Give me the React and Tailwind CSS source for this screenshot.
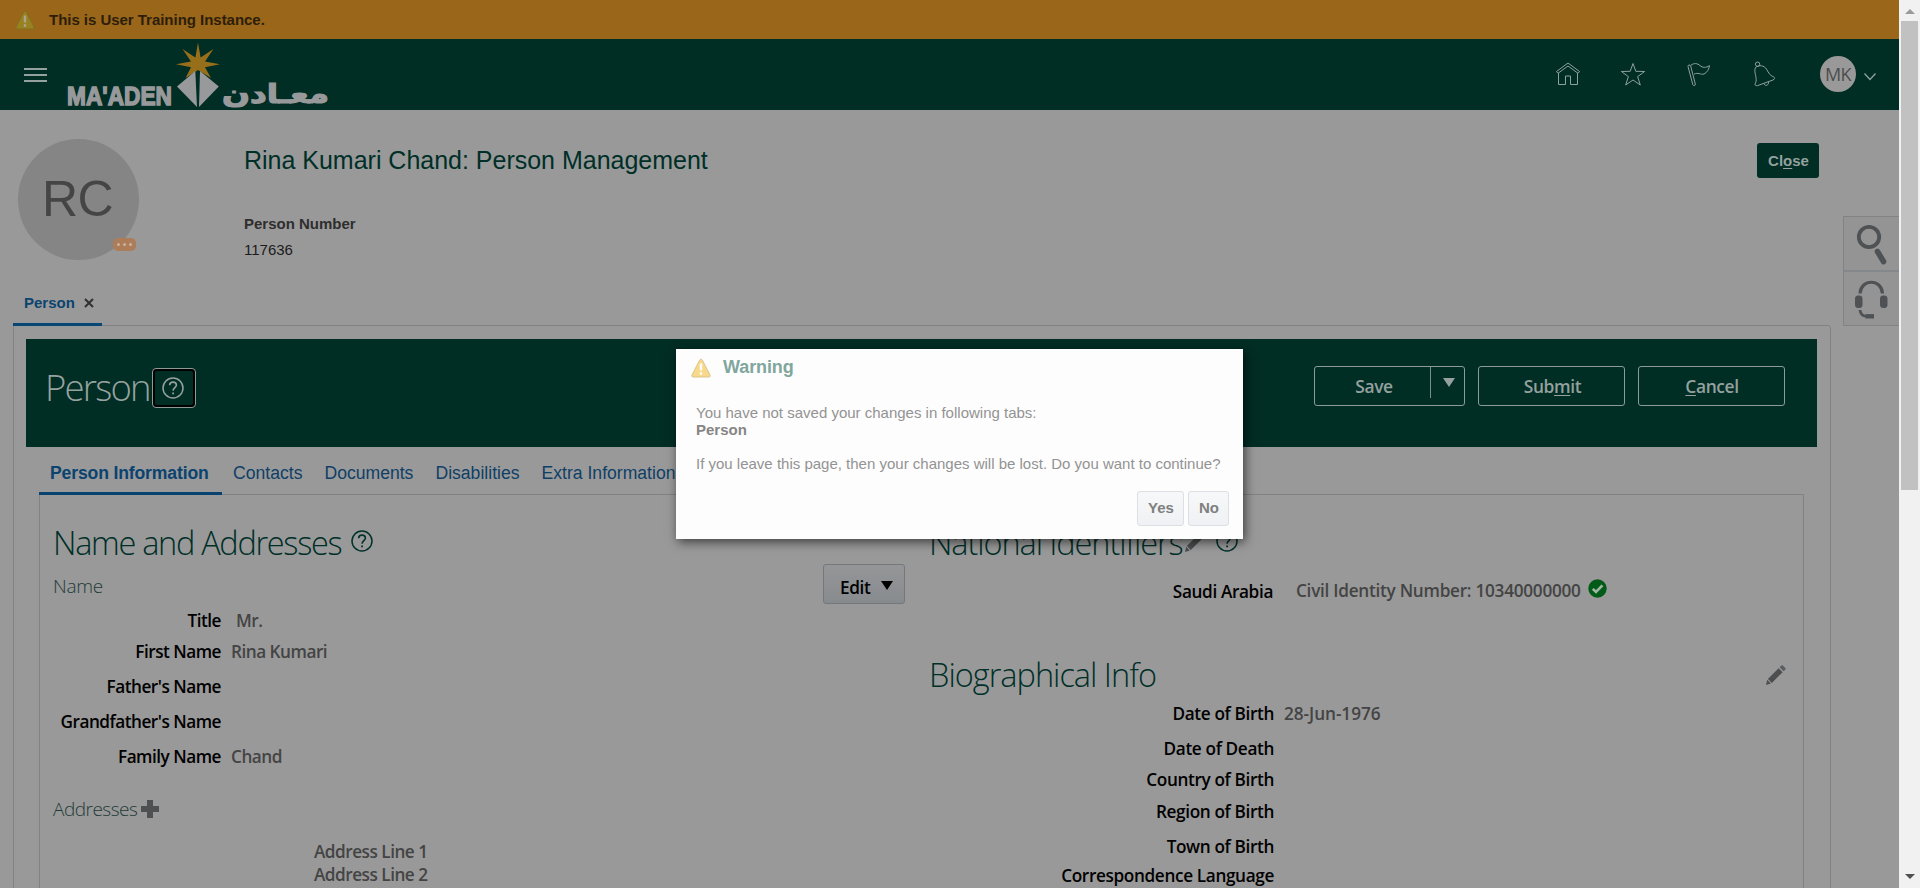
import React from "react";

const sans = "font-['Liberation_Sans',Arial,sans-serif]";
const ui = "font-['Open_Sans','Noto_Sans',sans-serif]";

function WarningIcon({ className, fill, stroke, mark }) {
  return (
    <svg className={className} viewBox="0 0 20 20">
      <path d="M10 1.2 Q10.9 1.2 11.4 2.2 L19 17 Q19.6 18.9 18 19 H2 Q.4 18.9 1 17 L8.6 2.2 Q9.1 1.2 10 1.2Z" fill={fill} stroke={stroke} strokeWidth="1" />
      <path d="M10 5.5 V12.5 M10 14.3 V16.8" stroke={mark} strokeWidth="2.4" />
    </svg>
  );
}

function HelpIcon({ className }) {
  return (
    <svg className={className} viewBox="0 0 22 22" fill="none" stroke="currentColor">
      <circle cx="11" cy="11" r="10" strokeWidth="1.5" />
      <path d="M7.6 8.3 C7.7 6.2 9.1 5.1 11 5.1 C13 5.1 14.4 6.3 14.4 8.1 C14.4 10.6 11.1 10.8 11.1 13.8" strokeWidth="1.6" />
      <path d="M11.1 15.4 V17.2" strokeWidth="1.8" />
    </svg>
  );
}

function Pencil({ className }) {
  return (
    <svg className={className} viewBox="0 0 20 20" fill="#4c4e50">
      <path d="M0 20 L1.2 14.8 L4.8 18.6 Z" />
      <path d="M1.9 14 L12.6 3.2 L16.6 7.2 L5.8 18 Z" />
      <path d="M13.6 2.2 L15.2 .6 Q16 0 16.8 .6 L19.3 3.1 Q20 3.9 19.3 4.7 L17.6 6.3 Z" fill="#5b5d60" />
    </svg>
  );
}

function Logo() {
  return (
    <svg className="block h-[71px] w-[270px]" viewBox="64 39 270 71">
      <path
        d="M198 42.5 L200.6 57.5 L213.5 49 L205 61.5 L220 64.3 L205 67.2 L211 78 L198 70 L185.5 78 L191 67.2 L176 64.3 L191 61.5 L182.5 49 L195.4 57.5 Z"
        fill="#976f1a"
      />
      <path d="M195.3 71 L177 86.5 L197 107 Z" fill="#98999b" />
      <path d="M200 71 L218.8 86.5 L199 107 Z" fill="#98999b" />
      <text x="67" y="105" textLength="105" lengthAdjust="spacingAndGlyphs" fontFamily="Liberation Sans, Arial, sans-serif" fontWeight="700" fontSize="26" fill="#98999b" stroke="#98999b" strokeWidth="1.5">
        MA'ADEN
      </text>
      <text x="329" y="102.5" direction="rtl" textLength="107" lengthAdjust="spacingAndGlyphs" fontFamily="DejaVu Sans, sans-serif" fontWeight="700" fontSize="26" fill="#98999b" stroke="#98999b" strokeWidth="1.2">
        معـادن
      </text>
    </svg>
  );
}

function Header() {
  return (
    <header className="flex h-[71px] shrink-0 items-start bg-[#002d24] text-[#8fa29d]">
      <div className="ml-6 mt-[29px] flex w-[23px] flex-col gap-1">
        <div className="h-[2px] bg-[#95a19e]" />
        <div className="h-[2px] bg-[#95a19e]" />
        <div className="h-[2px] bg-[#95a19e]" />
      </div>
      <div className="ml-[17px]">
        <Logo />
      </div>
      <div className="ml-auto flex pt-[22px]">
        <svg className="mr-[39px] h-[26px] w-[26px]" viewBox="0 0 26 26" fill="none" stroke="currentColor" strokeWidth="1">
          <path d="M1.5 10.5 L13 2 L24.5 10.5 L23 12.3 L13 5 L3 12.3 Z" />
          <path d="M3.5 12 V23.5 H10.5 V15 H15.5 V23.5 H22.5 V12" />
        </svg>
        <svg className="mr-10 h-[26px] w-[26px]" viewBox="0 0 26 26" fill="none" stroke="currentColor" strokeWidth="1">
          <path d="M13 2.5 L15.8 10.3 L24.6 10.5 L17.6 15.6 L20.3 24 L13 19 L5.7 24 L8.4 15.6 L1.4 10.5 L10.2 10.3 Z" />
        </svg>
        <svg className="mr-10 h-[26px] w-[26px]" viewBox="0 0 26 26" fill="none" stroke="currentColor" strokeWidth="1">
          <path d="M2 5.5 Q1.8 4.3 3 4 Q4.3 3.7 4.7 5 L9.3 23 Q9.5 24.3 8.4 24.6 Q7.2 24.8 6.8 23.6 Z" />
          <path d="M5 4.2 C8 1.8 11.5 2.2 14 4.6 C16.5 6.8 20 7 23.5 4.6 C23 8 21.3 11.5 18 13 C14.5 14 12 11 8 13.2" />
        </svg>
        <svg className="mr-[42px] h-[26px] w-[26px]" viewBox="0 0 26 26" fill="none" stroke="currentColor" strokeWidth="1">
          <circle cx="5.6" cy="3.2" r="2.2" />
          <path d="M3.5 6.5 C7 3.7 12 4.2 14.5 8.2 C17 12.5 18 14.5 21.5 15.8 C23.2 16.6 22.8 18.3 21 19 L5.5 24.6 C3.6 25 2.3 23.9 3.4 22.3 C6 17.6 1.2 11 3.5 6.5 Z" />
          <path d="M12 22.4 C12.5 25.6 17 24.8 16.6 20.8" />
        </svg>
      </div>
      <div className={`mt-[17px] flex h-9 w-9 items-center justify-center rounded-full bg-[#999] text-[18px] tracking-[-0.5px] text-[#4d4d4d] ${ui}`}>MK</div>
      <svg className="ml-[6px] mr-[21px] mt-[33px] h-[9px] w-[16px]" viewBox="0 0 16 9" fill="none" stroke="currentColor" strokeWidth="1.3">
        <path d="M2.5 1.5 L8 7.5 L13.5 1.5" />
      </svg>
    </header>
  );
}

function Profile() {
  return (
    <section className={`flex h-[165px] shrink-0 pl-[18px] pr-20 ${sans}`}>
      <div className="relative mt-[29px] flex h-[121px] w-[121px] items-center justify-center rounded-full bg-[#858585] pr-[2px] text-[50px] tracking-[-0.6px] text-[#454545]">
        RC
        <div className="absolute left-[95px] top-[99px] flex h-[13px] w-[23px] items-center justify-center gap-[3px] rounded-[5px] bg-[#ad7c58]">
          <i className="h-[3px] w-[3px] rounded-full bg-[#c9b29f]" />
          <i className="h-[3px] w-[3px] rounded-full bg-[#c9b29f]" />
          <i className="h-[3px] w-[3px] rounded-full bg-[#c9b29f]" />
        </div>
      </div>
      <div className="ml-[105px] pt-[35px]">
        <h1 className="text-[25px] leading-[30px] tracking-[-0.01px] text-[#002f28]">Rina Kumari Chand: Person Management</h1>
        <div className="mt-[39px] text-[15px] font-bold leading-5 text-[#2e2e2e]">Person Number</div>
        <div className="mt-[6px] text-[15px] leading-5 text-[#1c1c1c]">117636</div>
      </div>
      <button className="ml-auto mt-[33px] h-[35px] w-[62px] rounded-[3px] bg-[#002d24] pl-[1px] pt-[1px] text-[15px] font-bold text-[#94a19e]">
        Cl<span className="underline underline-offset-2">o</span>se
      </button>
    </section>
  );
}

function ActionBar() {
  const button = "flex h-10 items-center justify-center rounded-[3px] border border-[#8d9c98] text-[17.4px] font-semibold tracking-[-0.4px] text-[#94a19e]";
  return (
    <div className={`flex h-[108px] items-start bg-[#002d24] ${ui}`}>
      <h2 className="ml-[19px] mt-[23px] w-[107px] whitespace-nowrap text-[36.5px] font-light leading-[50px] tracking-[-1.8px] text-[#97a29f]">Person</h2>
      <div className="mt-[29px] rounded-[4px] border border-[#8d9c98] bg-black p-[2px]">
        <div className="flex h-[34px] w-[38px] items-center justify-center rounded-[2px] bg-[#002d24] pr-[3px]">
          <HelpIcon className="h-[22px] w-[22px] text-[#97a29f]" />
        </div>
      </div>
      <div className="ml-auto mr-8 mt-[27px] flex gap-[13px]">
        <div className={`${button} w-[151px] !justify-start`}>
          <span className="w-[115px] text-center pl-[3px]">Save</span>
          <div className="flex h-full w-[34px] items-start justify-center">
            <div className="mr-auto h-[31px] w-px bg-[#7c8e89]" />
            <svg className="mr-[9px] mt-[11px] h-[9px] w-[12px]" viewBox="0 0 12 9" fill="#94a19e"><path d="M0 0 H12 L6 9 Z" /></svg>
          </div>
        </div>
        <div className={`${button} w-[147px] pl-[2px]`}>Sub<span className="underline underline-offset-2">m</span>it</div>
        <div className={`${button} w-[147px] pl-[1px]`}><span className="underline underline-offset-2">C</span>ancel</div>
      </div>
    </div>
  );
}

function Tabs() {
  return (
    <nav className={`ml-[13px] flex h-[47px] text-[17.6px] leading-[22px] text-[#0f3f66] ${sans}`}>
      <div className="relative w-[183px] whitespace-nowrap pl-[11px] pt-[15px] font-bold tracking-[-0.15px] text-[#0b4370]">
        Person Information
        <div className="absolute -bottom-[1px] left-0 h-[3px] w-[183px] bg-[#08426f]" />
      </div>
      <div className="ml-[11px] flex gap-[22px] whitespace-nowrap pt-[15px]">
        <span>Contacts</span>
        <span>Documents</span>
        <span>Disabilities</span>
        <span>Extra Information</span>
      </div>
    </nav>
  );
}

function Field({ label, value, height, labelClass, valueClass }) {
  return (
    <div className={`flex ${height} items-start text-[17.2px] font-semibold leading-[22px]`}>
      <div className={`flex-1 whitespace-nowrap text-right text-black ${labelClass}`}>{label}</div>
      <div className={`whitespace-nowrap text-[#444] ${valueClass}`}>{value}</div>
    </div>
  );
}

const nameFields = [
  ["Title", "Mr.", "h-[31px]", "w-[590px] pl-[15px] tracking-[-0.5px]"],
  ["First Name", "Rina Kumari", "h-[35px]", "w-[590px] pl-[10px] tracking-[-0.5px]"],
  ["Father's Name", "", "h-[35px]", "w-[590px] pl-[10px]"],
  ["Grandfather's Name", "", "h-[35px]", "w-[590px] pl-[10px]"],
  ["Family Name", "Chand", "h-[35px]", "w-[590px] pl-[10px] tracking-[-0.5px]"],
];

const bioFields = [
  ["Date of Birth", "28-Jun-1976", "h-[35px]"],
  ["Date of Death", "", "h-[31px]"],
  ["Country of Birth", "", "h-[32px]"],
  ["Region of Birth", "", "h-[35px]"],
  ["Town of Birth", "", "h-[29px]"],
  ["Correspondence Language", "", "h-[30px]"],
];

const sectionTitle = "whitespace-nowrap text-[32.5px] font-light leading-[40px] text-[#002f28]";

function Details() {
  return (
    <div className={`ml-[13px] mr-[13px] flex h-[500px] border border-[#7f8385] ${ui}`}>
      <div className="w-[889px] pt-[28px]">
        <div className="flex pl-[13px]">
          <h3 className={`${sectionTitle} w-[298px] tracking-[-1.3px]`}>Name and Addresses</h3>
          <HelpIcon className="mt-[7px] h-[22px] w-[22px] text-[#00312a]" />
        </div>
        <div className="flex h-[47px] pl-[13px]">
          <div className="mt-[10px] text-[19px] font-light leading-[26px] tracking-[-0.3px] text-[#1f3b38]">Name</div>
          <div className="ml-auto mr-[24px] mt-[1px] flex h-10 w-[82px] items-start rounded-[3px] border border-[#74787b] bg-gradient-to-b from-[#949698] to-[#888b8e] pl-[16px] text-[17.2px] font-semibold leading-[22px] tracking-[-0.4px] text-black">
            <span className="mt-[12px]">Edit</span>
            <svg className="ml-auto mr-[11px] mt-[16px] h-[9px] w-[12px]" viewBox="0 0 12 9"><path d="M0 0 H12 L6 9 Z" /></svg>
          </div>
        </div>
        <div className="w-[771px]">
          {nameFields.map(([label, value, height, valueClass]) => (
            <Field key={label} label={label} value={value} height={height} labelClass="tracking-[-0.5px]" valueClass={valueClass} />
          ))}
        </div>
        <div className="mt-[16px] flex pl-[13px]">
          <div className="-mt-[1px] mb-[1px] w-[88px] text-[19px] font-light leading-[26px] tracking-[-0.5px] text-[#1f3b38]">Addresses</div>
          <svg className="mt-[3px] h-[18px] w-[18px]" viewBox="0 0 18 18" fill="#4e5052"><path d="M6 0 H12 V6 H18 V12 H12 V18 H6 V12 H0 V6 H6 Z" /></svg>
        </div>
        <div className="mt-[17px] pl-[274px] text-[17.2px] font-semibold leading-[23px] tracking-[-0.5px] text-[#444]">
          <div>Address Line 1</div>
          <div>Address Line 2</div>
        </div>
      </div>
      <div className="flex-1 pt-[28px]">
        <div className="flex">
          <h3 className={`${sectionTitle} w-[256px] tracking-[-1.1px]`}>National Identifiers</h3>
          <Pencil className="mt-[9px] h-[20px] w-[20px]" />
          <HelpIcon className="ml-[11px] mt-[7px] h-[22px] w-[22px] text-[#00312a]" />
        </div>
        <div className="mt-[18px] flex w-[872px] text-[17.2px] font-semibold leading-[22px]">
          <div className="w-[344px] text-right tracking-[-0.36px] text-black">Saudi Arabia</div>
          <div className="-mt-[1px] ml-[23px] w-[284px] whitespace-nowrap tracking-[-0.27px] text-[#444]">Civil Identity Number: 10340000000</div>
          <svg className="-mt-[2px] ml-[8px] h-[19px] w-[19px]" viewBox="0 0 19 19">
            <circle cx="9.5" cy="9.5" r="9.2" fill="#005b18" />
            <path d="M4.8 9.8 L8 13 L14.4 6.4" fill="none" stroke="#a2b5a5" strokeWidth="2.6" />
          </svg>
        </div>
        <div className="mt-[52px] flex h-[48px]">
          <h3 className={`${sectionTitle} tracking-[-1px]`}>Biographical Info</h3>
          <Pencil className="ml-auto mr-[17px] mt-[10px] h-[20px] w-[20px]" />
        </div>
        <div className="w-[873px]">
          {bioFields.map(([label, value, height]) => (
            <Field key={label} label={label} value={value} height={height} labelClass="tracking-[-0.36px]" valueClass="w-[528px] pl-[10px] tracking-[-0.05px]" />
          ))}
        </div>
      </div>
    </div>
  );
}

function SideTools() {
  return (
    <aside className="absolute left-[1843px] top-[216px] flex w-14 flex-col border border-r-0 border-[#818384] bg-[#949494]">
      <div className="h-[55px] border-b-2 border-[#84888b]">
        <svg className="h-[53px] w-[55px]" viewBox="0 0 55 53" fill="none" stroke="#4e5255">
          <circle cx="25" cy="20" r="10.2" strokeWidth="3.8" />
          <path d="M33.5 34.5 L39.5 44.5" strokeWidth="5.6" strokeLinecap="round" />
        </svg>
      </div>
      <div className="h-[53px]">
        <svg className="h-[53px] w-[55px]" viewBox="0 0 55 53" fill="none" stroke="#4e5255">
          <path d="M16 21.5 C17 6.5 37.5 6.5 38.5 21.5" strokeWidth="3.2" />
          <rect x="11.5" y="24" width="6.5" height="11.5" rx="2.2" fill="#4e5255" />
          <rect x="36.5" y="24" width="6.5" height="11.5" rx="2.2" fill="#4e5255" />
          <path d="M16 38 Q16.5 44 23 44.5" strokeWidth="2.8" />
          <path d="M21.5 44.3 H30" strokeWidth="4.4" />
        </svg>
      </div>
    </aside>
  );
}

function WarningDialog() {
  const button = "flex h-[35px] items-center justify-center rounded-[3px] border border-[#dcdfe3] bg-gradient-to-b from-[#f6f8f9] to-[#eff1f4] pl-[1px] text-[15px] font-bold text-[#7f7f7f]";
  return (
    <div role="dialog" className={`absolute left-[676px] top-[349px] h-[190px] w-[567px] bg-[#fdfdfd] shadow-[2px_3px_10px_rgba(0,0,0,0.6)] ${sans}`}>
      <div className="flex pl-[15px] pt-[7px]">
        <WarningIcon className="mt-[2px] h-5 w-5" fill="#f8d98c" stroke="#dcc58a" mark="#fffdf5" />
        <h4 className="ml-[12px] text-[18px] font-bold leading-[22px] tracking-[-0.1px] text-[#80a69d]">Warning</h4>
      </div>
      <div className="ml-5 mt-[26px] whitespace-nowrap text-[15px] leading-[17px] text-[#939393]">
        <p>You have not saved your changes in following tabs:</p>
        <p className="font-bold text-[#858585]">Person</p>
        <p className="mt-[17px]">If you leave this page, then your changes will be lost. Do you want to continue?</p>
      </div>
      <div className="mr-[14px] mt-[19px] flex justify-end gap-1">
        <button className={`${button} w-[47px]`}>Yes</button>
        <button className={`${button} w-[41px]`}>No</button>
      </div>
    </div>
  );
}

export default function App() {
  return (
    <div className="flex h-[888px] w-[1920px] overflow-hidden bg-[#999]">
      <main className="relative flex w-[1899px] flex-col overflow-hidden">
        <div className={`flex h-[39px] shrink-0 items-center bg-[#9a6619] pl-[15px] text-[15px] font-bold text-[#2c1e0b] ${sans}`}>
          <WarningIcon className="mr-[14px] h-5 w-5" fill="#998120" stroke="#80701f" mark="#aaa591" />
          <span className="pt-[1px] tracking-[-0.03px]">This is User Training Instance.</span>
        </div>
        <Header />
        <Profile />
        <div className={`ml-[13px] flex h-[50px] shrink-0 text-[15px] font-bold text-[#0b446f] ${sans}`}>
          <div className="relative z-10 flex w-[89px] pl-[11px] pt-[18px] leading-5">
            Person
            <svg className="ml-[9px] mt-[5px] h-[10px] w-[10px]" viewBox="0 0 10 10" stroke="#303030" strokeWidth="2"><path d="M1 1 L9 9 M9 1 L1 9" /></svg>
            <div className="absolute -bottom-[1px] left-0 h-[3px] w-[89px] bg-[#084673]" />
          </div>
        </div>
        <div className="ml-[13px] h-[600px] w-[1818px] shrink-0 rounded-tr-[3px] border border-[#7f8385] pl-[12px] pr-[13px] pt-[13px]">
          <ActionBar />
          <Tabs />
          <Details />
        </div>
        <SideTools />
        <WarningDialog />
      </main>
      <div className="flex w-[21px] flex-col items-center bg-[#f1f1f1]">
        <svg className="mt-[9px] h-[5px] w-[10px]" viewBox="0 0 10 5" fill="#9a9a9a"><path d="M0 5 L5 0 L10 5 Z" /></svg>
        <div className="mt-[7px] h-[469px] w-[17px] bg-[#c1c1c1]" />
        <svg className="mb-[9px] mt-auto h-[5px] w-[10px]" viewBox="0 0 10 5" fill="#505050"><path d="M0 0 H10 L5 5 Z" /></svg>
      </div>
    </div>
  );
}
